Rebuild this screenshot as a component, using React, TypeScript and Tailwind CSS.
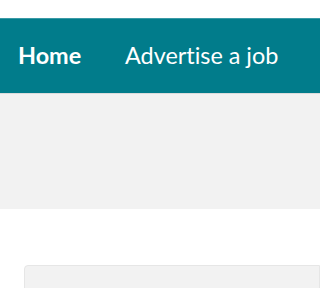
export default function App() {
  return (
    <div className="min-h-[288px] w-full overflow-hidden bg-white" style={{ fontFamily: "Lato, sans-serif" }}>
      <div className="h-[18px]" />
      <nav className="flex h-[75px] items-center border-t border-[#3a9aa6] bg-[#017c8b] pl-[18px] text-[23.4px] whitespace-nowrap text-white [font-variant-ligatures:none]">
        <a className="w-[107px] font-bold">Home</a>
        <a>Advertise a job</a>
      </nav>
      <div className="h-[116px] border-t border-[#dcdcdc] bg-[#f2f2f2]" />
      <div className="pt-[56px] pl-[24px]">
        <div className="h-[40px] rounded-tl-[4px] border border-[#e6e6e6] bg-[#f2f2f2]" />
      </div>
    </div>
  );
}
